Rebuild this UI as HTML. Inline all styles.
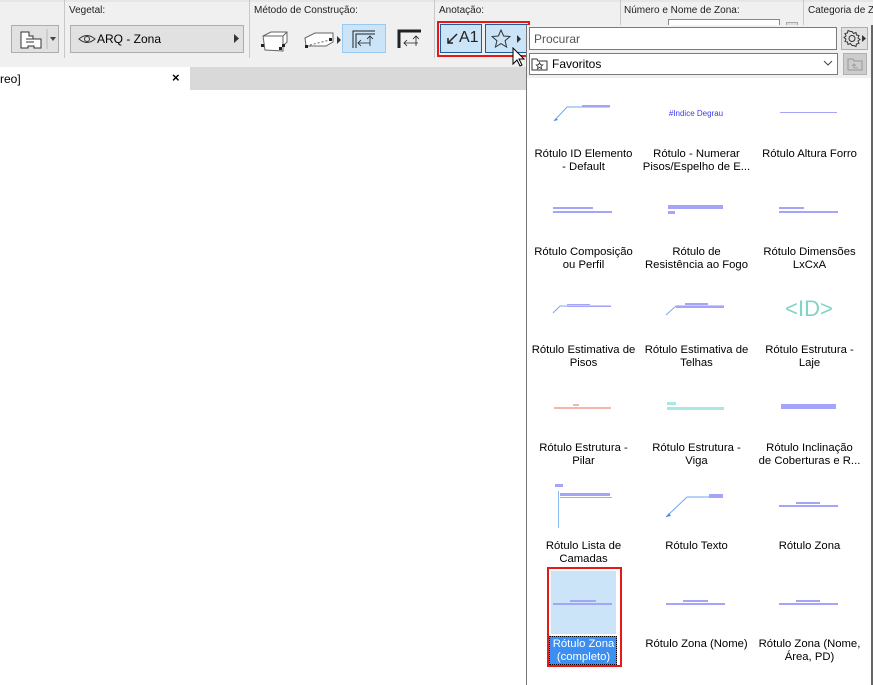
<!DOCTYPE html>
<html><head><meta charset="utf-8"><style>
*{margin:0;padding:0;box-sizing:border-box}
body{width:873px;height:685px;overflow:hidden;background:#fff;font-family:"Liberation Sans",sans-serif;position:relative;font-size:11px;color:#000}
.a{position:absolute}
.lbl{font-size:10px;color:#222;top:5px;white-space:nowrap}
.sep{width:1px;background:#c8c8c8;top:0;height:58px}
.cap{position:absolute;width:113px;text-align:center;font-size:11.3px;line-height:13px;color:#000;white-space:nowrap}
</style></head><body>
<div class="a" style="left:0;top:0;width:873px;height:67px;background:#f0f0f0;border-top:2px solid #e6e6e6"></div>
<div class="a sep" style="left:64px"></div>
<div class="a sep" style="left:249px"></div>
<div class="a sep" style="left:434px"></div>
<div class="a sep" style="left:620px"></div>
<div class="a sep" style="left:803px"></div>
<div class="a lbl" style="left:69px">Vegetal:</div>
<div class="a lbl" style="left:254px">Método de Construção:</div>
<div class="a lbl" style="left:439px">Anotação:</div>
<div class="a lbl" style="left:624px">Número e Nome de Zona:</div>
<div class="a lbl" style="left:808px">Categoria de Zo</div>
<div class="a" style="left:11px;top:25px;width:48px;height:28px;background:#e1e1e1;border:1px solid #adadad"></div>
<svg class="a" style="left:11px;top:25px" width="48" height="28"><path d="M10 7h8v4h4v3h8v9h-7v-2h-6v2h-7z" fill="#fff" stroke="#333"/><path d="M15 14h8M15 17h8" stroke="#333"/><line x1="36" y1="4" x2="36" y2="24" stroke="#bbb"/><path d="M39 12h6l-3 4z" fill="#444"/></svg>
<div class="a" style="left:70px;top:25px;width:174px;height:28px;background:#e1e1e1;border:1px solid #adadad"></div>
<svg class="a" style="left:78px;top:32px" width="18" height="14"><path d="M1 7Q9 0 17 7Q9 14 1 7z" fill="none" stroke="#333"/><circle cx="9" cy="7" r="2.5" fill="none" stroke="#333"/></svg>
<div class="a" style="left:97px;top:32px;font-size:12px">ARQ - Zona</div>
<svg class="a" style="left:234px;top:34px" width="6" height="9"><path d="M0 0l5 4.5L0 9z" fill="#333"/></svg>
<svg class="a" style="left:258px;top:28px" width="34" height="24"><path d="M5 8l8-4h16v10l-4 4v5l-18-1z" fill="#fff" stroke="#666"/><path d="M5 8h20l4-4M25 8v10" fill="none" stroke="#666"/><rect x="3" y="16" width="3" height="3" fill="#222"/><rect x="24" y="16" width="3" height="3" fill="#222"/><rect x="21" y="19" width="3" height="3" fill="#222"/></svg>
<svg class="a" style="left:302px;top:28px" width="44" height="24"><path d="M3 10l10-5h18v9l-7 4H4z" fill="#fff" stroke="#666"/><path d="M4 18l24-6" stroke="#666" stroke-dasharray="2 2"/><rect x="3" y="17" width="3" height="3" fill="#222"/><rect x="27" y="10" width="3" height="3" fill="#222"/><path d="M35 8l4 4-4 4z" fill="#333"/></svg>
<div class="a" style="left:342px;top:24px;width:44px;height:29px;background:#cce4f7;border:1px solid #99c9ef"></div>
<svg class="a" style="left:350px;top:28px" width="30" height="22"><path d="M3 20V3h22M6 20V6h19" fill="none" stroke="#222"/><path d="M20 18V8M17 11l3-3 3 3M8 15h12M11 12l-3 3 3 3" fill="none" stroke="#222" stroke-width=".8"/></svg>
<svg class="a" style="left:396px;top:28px" width="28" height="22"><path d="M3 20V3h22" fill="none" stroke="#222" stroke-width="3"/><path d="M20 18V8M17 11l3-3 3 3M8 15h14M11 12l-3 3 3 3" fill="none" stroke="#222" stroke-width=".8"/></svg>
<div class="a" style="left:437px;top:21px;width:93px;height:36px;border:2px solid #e81818"></div>
<div class="a" style="left:440px;top:24px;width:42px;height:29px;background:#cce4f7;border:1px solid #1d5e98"></div>
<div class="a" style="left:485px;top:24px;width:43px;height:29px;background:#cce4f7;border:1px solid #1d5e98"></div>
<svg class="a" style="left:446px;top:31px" width="12" height="14"><path d="M11 3L2 12M2 7v5h5" fill="none" stroke="#222" stroke-width="1.5"/></svg>
<div class="a" style="left:459px;top:29px;font-size:16px;color:#222">A1</div>
<svg class="a" style="left:491px;top:29px" width="20" height="19"><path d="M10 1l2.6 6 6.4.5-4.9 4.2 1.5 6.3L10 14.6 4.4 18l1.5-6.3L1 7.5l6.4-.5z" fill="none" stroke="#333"/></svg>
<svg class="a" style="left:517px;top:35px" width="5" height="8"><path d="M0 0l4 4-4 4z" fill="#333"/></svg>
<div class="a" style="left:668px;top:19px;width:112px;height:8px;background:#fff;border:1px solid #888;border-bottom:none"></div>
<div class="a" style="left:786px;top:22px;width:12px;height:5px;background:#ddd;border:1px solid #aaa;border-bottom:none"></div>
<div class="a" style="left:0;top:67px;width:527px;height:23px;background:#d9d9d9"></div>
<div class="a" style="left:0;top:67px;width:190px;height:23px;background:#fff"></div>
<div class="a" style="left:0;top:72px;font-size:12px">reo]</div>
<div class="a" style="left:172px;top:70px;font-size:13px;font-weight:bold">×</div>
<div class="a" style="left:526px;top:25px;width:347px;height:660px;background:#fff;border-left:1px solid #777"></div>
<div class="a" style="left:527px;top:25px;width:345px;height:53px;background:#f0f0f0"></div>
<div class="a" style="left:871px;top:25px;width:2px;height:660px;background:#666"></div>
<div class="a" style="left:529px;top:27px;width:308px;height:23px;background:#fff;border:1px solid #7a7a7a"></div>
<div class="a" style="left:534px;top:32px;font-size:12px;color:#555">Procurar</div>
<div class="a" style="left:841px;top:27px;width:27px;height:23px;background:#e1e1e1;border:1px solid #adadad"></div>
<svg class="a" style="left:843px;top:29px" width="24" height="19"><circle cx="9" cy="9.5" r="3" fill="none" stroke="#333"/><path d="M9 2.5l1.5 2 2.5-1 .5 2.5 2.5.5-1 2.5 2 1.5-2 1.5 1 2.5-2.5.5-.5 2.5-2.5-1L9 16.5l-1.5-2-2.5 1-.5-2.5-2.5-.5 1-2.5-2-1.5 2-1.5-1-2.5 2.5-.5.5-2.5 2.5 1z" fill="none" stroke="#333"/><path d="M19 6l4 3.5-4 3.5z" fill="#333"/></svg>
<div class="a" style="left:529px;top:53px;width:309px;height:22px;background:#fff;border:1px solid #7a7a7a"></div>
<svg class="a" style="left:531px;top:57px" width="18" height="14"><path d="M1 2h5l1 2h9v9H1z" fill="#fff" stroke="#333"/><path d="M8.5 5.5l1 2.2 2.3.2-1.8 1.5.6 2.3-2.1-1.3-2 1.3.5-2.3L5.3 7.9l2.3-.2z" fill="none" stroke="#333" stroke-width=".8"/></svg>
<div class="a" style="left:552px;top:57px;font-size:12px">Favoritos</div>
<svg class="a" style="left:823px;top:60px" width="10" height="6"><path d="M1 1l4 4 4-4" fill="none" stroke="#444"/></svg>
<div class="a" style="left:843px;top:53px;width:24px;height:22px;background:#ccc;border:1px solid #b0b0b0"></div>
<svg class="a" style="left:847px;top:57px" width="16" height="14"><path d="M1 2h5l1 2h8v9H1z" fill="none" stroke="#999"/><path d="M5 9l2-2 2 2M7 7v4h4" fill="none" stroke="#999" stroke-width=".8"/></svg>
<div class="a" style="left:547px;top:567px;width:75px;height:100px;border:2px solid #e81818"></div>
<div class="a" style="left:551px;top:571px;width:65px;height:63px;background:#cce4f7"></div>
<div class="a" style="left:549px;top:636px;width:68px;height:29px;background:#3c8ff0;outline:1px dotted #000;outline-offset:-1px"></div>
<svg class="a" style="left:0;top:0" width="873" height="685">
<g fill="#a4a4f8">
<path d="M554 121L567 107H610" fill="none" stroke="#6fa8f0"/><path d="M554 121l4-1-2-2z" fill="#4a8ce8"/><rect x="582" y="105" width="28" height="2"/>
<rect x="780" y="112" width="57" height="1"/>
<rect x="553" y="207" width="40" height="2"/><rect x="553" y="211" width="59" height="2"/>
<rect x="668" y="205" width="55" height="4"/><rect x="668" y="211" width="7" height="3"/>
<rect x="779" y="207" width="25" height="2"/><rect x="779" y="211" width="59" height="2"/>
<path d="M553 313L560 306H611" fill="none" stroke="#7aaaf0"/><rect x="567" y="304" width="23" height="1"/><rect x="567" y="306" width="44" height="1"/>
<path d="M666 315L676 306H724" fill="none" stroke="#7aaaf0"/><rect x="685" y="303" width="23" height="2"/><rect x="676" y="306" width="48" height="2"/>
<rect x="781" y="404" width="55" height="5"/>
<rect x="555" y="484" width="8" height="3"/><rect x="558" y="491" width="1" height="37" fill="#8ab8f0"/><rect x="560" y="493" width="50" height="3"/><rect x="560" y="497" width="52" height="1" fill="#8ab8f0"/>
<path d="M666 517L687 497H709" fill="none" stroke="#6fa8f0"/><path d="M666 517l5-1-2-3z" fill="#4a8ce8"/><rect x="709" y="494" width="14" height="4"/>
<rect x="796" y="502" width="24" height="2"/><rect x="779" y="505" width="59" height="2"/>
<rect x="570" y="600" width="26" height="2"/><rect x="553" y="603" width="59" height="2"/>
<rect x="683" y="600" width="25" height="2"/><rect x="666" y="603" width="59" height="2"/>
<rect x="796" y="600" width="24" height="2"/><rect x="779" y="603" width="59" height="2"/>
</g>
<g fill="#f6b6ae"><rect x="554" y="407" width="57" height="2"/><rect x="573" y="404" width="6" height="2"/></g>
<g fill="#a6e8e4"><rect x="667" y="402" width="9" height="3"/><rect x="667" y="407" width="57" height="3"/></g>
<text x="696" y="116" font-size="8" fill="#3a3af0" text-anchor="middle" font-family="Liberation Sans">#Indice Degrau</text>
<text x="809" y="316" font-size="22" fill="#80d4c4" text-anchor="middle" font-family="Liberation Sans">&lt;ID&gt;</text>
</svg>
<div class="cap" style="left:527px;top:148px">Rótulo ID Elemento<br>- Default</div>
<div class="cap" style="left:640px;top:148px">Rótulo - Numerar<br>Pisos/Espelho de E...</div>
<div class="cap" style="left:753px;top:148px">Rótulo Altura Forro</div>
<div class="cap" style="left:527px;top:246px">Rótulo Composição<br>ou Perfil</div>
<div class="cap" style="left:640px;top:246px">Rótulo de<br>Resistência ao Fogo</div>
<div class="cap" style="left:753px;top:246px">Rótulo Dimensões<br>LxCxA</div>
<div class="cap" style="left:527px;top:344px">Rótulo Estimativa de<br>Pisos</div>
<div class="cap" style="left:640px;top:344px">Rótulo Estimativa de<br>Telhas</div>
<div class="cap" style="left:753px;top:344px">Rótulo Estrutura -<br>Laje</div>
<div class="cap" style="left:527px;top:442px">Rótulo Estrutura -<br>Pilar</div>
<div class="cap" style="left:640px;top:442px">Rótulo Estrutura -<br>Viga</div>
<div class="cap" style="left:753px;top:442px">Rótulo Inclinação<br>de Coberturas e R...</div>
<div class="cap" style="left:527px;top:540px">Rótulo Lista de<br>Camadas</div>
<div class="cap" style="left:640px;top:540px">Rótulo Texto</div>
<div class="cap" style="left:753px;top:540px">Rótulo Zona</div>
<div class="cap" style="left:527px;top:638px;color:#fff">Rótulo Zona<br>(completo)</div>
<div class="cap" style="left:640px;top:638px">Rótulo Zona (Nome)</div>
<div class="cap" style="left:753px;top:638px">Rótulo Zona (Nome,<br>Área, PD)</div>
<svg class="a" style="left:512px;top:47px" width="14" height="22"><path d="M1 1v16l4-4 3 6 2-1-3-6h5z" fill="#fff" stroke="#000"/></svg>
</body></html>
